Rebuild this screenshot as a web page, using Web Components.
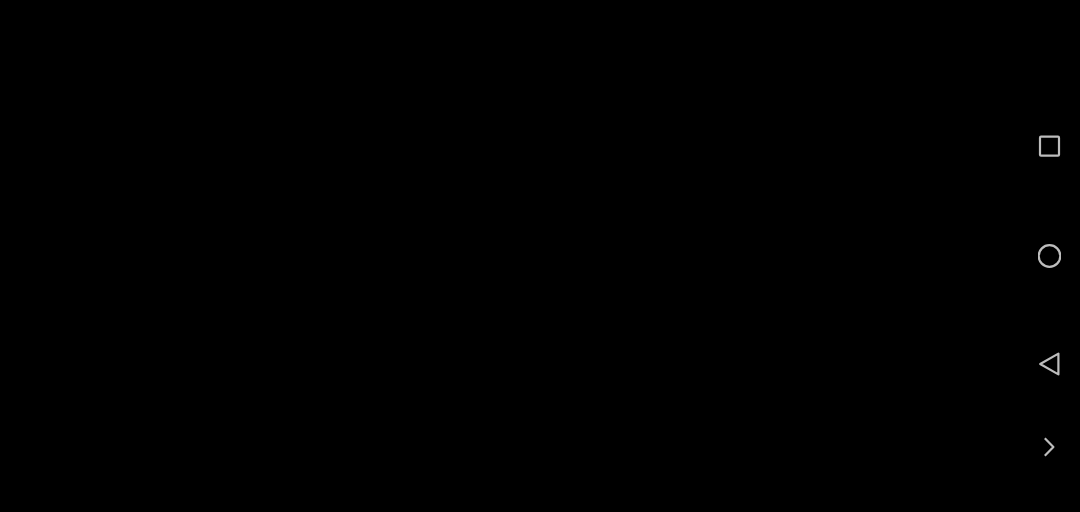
<!DOCTYPE html>
<html lang="en">
<head>
<meta charset="utf-8">
<title>Navigation bar</title>
<style>
  html, body { margin: 0; height: 100%; background: #000; }
  body { display: flex; justify-content: flex-end; overflow: hidden; }
</style>
</head>
<body>
<nav-bar>
  <nav-button shape="square" label="Recent apps"></nav-button>
  <nav-button shape="circle" label="Home"></nav-button>
  <nav-button shape="triangle" label="Back"></nav-button>
  <nav-button shape="chevron" label="Show more"></nav-button>
</nav-bar>

<script>
const SHAPES = {
  square: '<rect x="2" y="2.7" width="19" height="19" rx="1"/>',
  circle: '<circle cx="11.5" cy="12" r="10.8"/>',
  triangle: '<path d="M2.2 12 20.4 1.6 V22.4 Z"/>',
  chevron: '<path d="M6.8 3.2 15.4 12 6.8 20.8"/>'
};

class NavButton extends HTMLElement {
  constructor() {
    super();
    this.attachShadow({ mode: 'open' });
  }

  connectedCallback() {
    const shape = this.getAttribute('shape');
    const label = this.getAttribute('label') || '';
    this.shadowRoot.innerHTML = `
      <style>
        :host {
          display: flex;
          align-items: center;
          justify-content: center;
        }
        svg {
          display: block;
          width: 23px;
          height: 24px;
          fill: none;
          stroke: #bdbdbd;
          stroke-width: 2.2;
          stroke-linejoin: round;
        }
      </style>
      <svg viewBox="0 0 23 24" role="img" aria-label="${label}">${SHAPES[shape]}</svg>
    `;
  }
}

class NavBar extends HTMLElement {
  constructor() {
    super();
    this.attachShadow({ mode: 'open' });
  }

  connectedCallback() {
    this.shadowRoot.innerHTML = `
      <style>
        :host {
          display: grid;
          grid-template-rows: 110px 110px 106px 60px;
          width: 61px;
          height: 512px;
          box-sizing: border-box;
          padding-top: 91px;
          background: #000;
        }
      </style>
      <slot></slot>
    `;
  }
}

customElements.define('nav-button', NavButton);
customElements.define('nav-bar', NavBar);
</script>
</body>
</html>
